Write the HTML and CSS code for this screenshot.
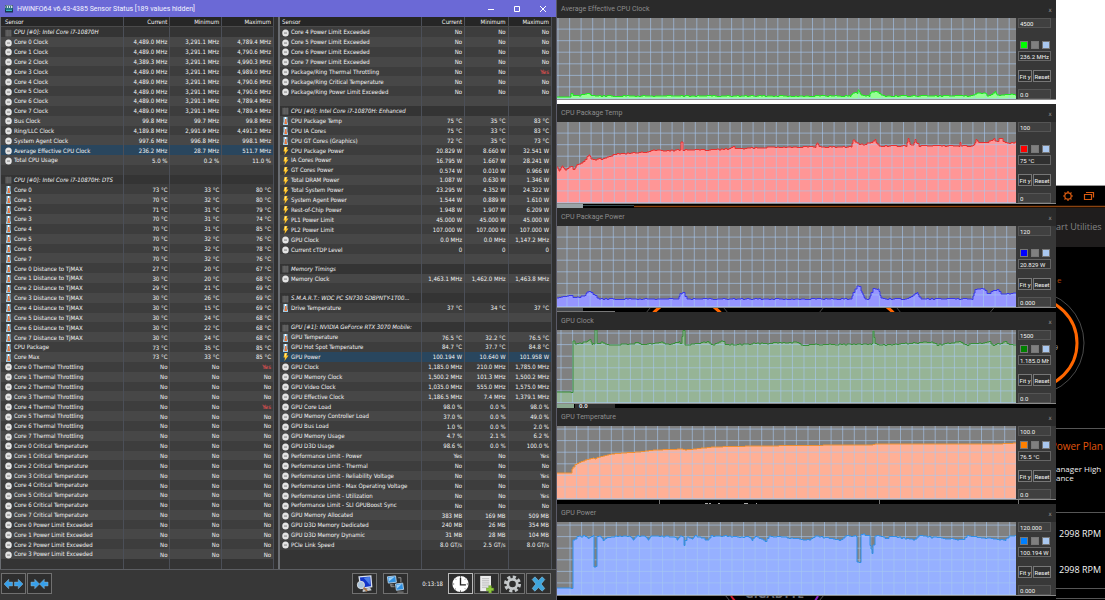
FILE: index.html
```
<!DOCTYPE html>
<html lang="en">
<head>
<meta charset="utf-8">
<title>HWiNFO64 Sensor Status</title>
<link rel="stylesheet" href="styles.css">
</head>
<body>
<svg width="0" height="0" class="defs" aria-hidden="true">
  <symbol id="clock" viewBox="0 0 14 16"><ellipse cx="7" cy="8" rx="6.5" ry="7.200" fill="#e4e4e4"/><path d="M4 7.2h6v1.8H4z" fill="#777"/></symbol>
  <symbol id="chip" viewBox="0 0 14 16"><path d="M1 2h12v13H1z" fill="#585858"/><path d="M2 1v14M5 1v14M8 1v14M11 1v14" stroke="#6b6b6b"/></symbol>
  <symbol id="temp" viewBox="0 0 14 16"><path d="M3 0h8v10l1 2v4H2v-4l1-2z" fill="#9fcbe4"/><path d="M6 4h3v5l1 3v2H5v-2l1-3z" fill="#e8743a"/><path d="M6 0h2v4H6z" fill="#fff"/></symbol>
  <symbol id="bolt" viewBox="0 0 14 16"><path d="M5 0h6L9 5h4L5 16l1-7H3z" fill="#ffc329"/><path d="M6 1h3L6 8z" fill="#fff09a"/></symbol>
</svg>
<div class="desktop">
  <svg class="backdrop" viewBox="0 0 1105 600" preserveAspectRatio="xMaxYMin slice" aria-hidden="true">
    <path d="M0 0h1105v600H0z" fill="#000"/>
    <path d="M0 0h1105v185H0z" fill="#fff"/>
    <path d="M1056 185h49v1h-49z" fill="#999"/>
    <path d="M557 204h26v4h-26z" fill="#9aa4a8"/>
    <path d="M583 205.500h51" stroke="#344a50"/>
    <path d="M634 206.500h471" stroke="#8a4310" stroke-width="1.500"/>
    <path d="M557 208h548v39H557z" fill="#1f1d1d"/>
    <g stroke="#d85a10" fill="none" stroke-width="1.200">
      <circle cx="1068" cy="196" r="3.200"/>
      <path d="M1068 191v2M1068 199v2M1063 196h2M1071 196h2M1064.500 192.500l1.400 1.400M1070.100 198.100l1.400 1.400M1071.500 192.500l-1.400 1.400M1065.900 198.100l-1.400 1.400"/>
      <path d="M1084.500 194.500h7v5h-7zM1086 192.500h7.500v5"/>
    </g>
    <g fill="none" stroke="#4a4a4a">
      <circle cx="687" cy="343" r="51"/><circle cx="860" cy="343" r="51"/><circle cx="1032" cy="343" r="52"/>
    </g>
    <g fill="none" stroke="#f60" stroke-width="3">
      <circle cx="687" cy="343" r="45"/><path d="M860 298a45 45 0 0 1 0 90M1032 298a45 45 0 0 1 0 90"/>
    </g>
    <path d="M557 308h26v4h-26z" fill="#44474c"/><path d="M557 311.500h58" stroke="#777"/>
    <path d="M557 404h17v5h-17z" fill="#8aa890"/><path d="M575 404h40v5h-40z" fill="#303030"/>
    <path d="M1056 428.500h49M1056 512.500h49M1056 588.500h49M1056 598.500h49" stroke="#555"/>
    <path d="M659.500 498v8M879.500 498v8M1018.500 498v8" stroke="#777"/>
    <path d="M705 503.500h3M709 503.500h2M718 503.500h2M744 503.500h4M756 503.500h1" stroke="#aaa"/>
    <path d="M731 596l4 5" stroke="#d01828" stroke-width="2"/><path d="M818 596l-3 5" stroke="#8a20c0" stroke-width="2"/>
    <path d="M725 595l5 6M824 595l-5 6" stroke="#555"/>
    <g class="app-text">
      <text x="1056" y="230" font-size="9" fill="#858585">art Utilities</text>
      <text x="1057" y="283" font-size="8" fill="#b34708">e</text>
      <text x="1054" y="350" font-size="7" fill="#aaa">9</text>
      <text x="1103" y="450" text-anchor="end" font-size="10" fill="#e2560d">Power Plan</text>
      <text x="1056" y="472" font-size="8" fill="#eee">anager High</text>
      <text x="1056" y="481" font-size="8" fill="#eee">ance</text>
      <text x="1101" y="537" text-anchor="end" font-size="9" fill="#f4f4f4">2998 RPM</text>
      <text x="1101" y="573" text-anchor="end" font-size="9" fill="#f4f4f4">2998 RPM</text>
      <text x="745" y="598" font-size="12" font-weight="bold" fill="#666">GIGABYTE</text>
      <text x="579" y="408" font-size="6" font-weight="bold" fill="#ddd">0.0</text>
    </g>
  </svg>

  <main class="sensors">
    <header class="titlebar">
      <svg class="logo" viewBox="0 0 16 16" aria-hidden="true"><path d="M0 0h16v15H0z" fill="#163850"/><path d="M1 1h14v5H1z" fill="#d6e7ea"/><path d="M3 2v4M7 2v4M11 2v4" stroke="#17506a" stroke-width="1.500"/><path d="M1 8h14M2 11h12" stroke="#37b3bd" stroke-width="2"/></svg>
      <h1>HWiNFO64 v6.43-4385 Sensor Status [189 values hidden]</h1>
      <div class="controls">
        <button aria-label="Minimize"><svg viewBox="0 0 8 8"><path d="M1 4.500h6"/></svg></button>
        <button aria-label="Maximize"><svg viewBox="0 0 8 8"><path d="M1.500 1.500h5v5h-5z"/></svg></button>
        <button aria-label="Close"><svg viewBox="0 0 8 8"><path d="M1 1l6 6M7 1L1 7"/></svg></button>
      </div>
    </header>
    <div class="panels">
      <div class="panel"><table id="left" class="left"></table></div>
      <div class="panel"><table id="right" class="right"></table></div>
    </div>
    <footer class="toolbar">
      <button aria-label="Expand"><svg viewBox="0 0 20 12"><path d="M0 6l5-5v3h4v4H5v3zM20 6l-5-5v3h-4v4h4v3z" fill="#35a0ec" stroke="#9ab4c4" stroke-width=".5"/></svg></button>
      <button aria-label="Collapse"><svg viewBox="0 0 20 12"><path d="M10 6L5 1v3H1v4h4v3zM10 6l5-5v3h4v4h-4v3z" fill="#35a0ec" stroke="#9ab4c4" stroke-width=".5"/></svg></button>
      <span class="spacer"></span>
      <button class="gap" aria-label="Sensor settings"><svg viewBox="0 0 20 20"><path d="M4 2l13-1 1 12-12 2z" fill="#1234c8" stroke="#d8e0ee" stroke-width="1.500"/><path d="M9 3l7-1v9z" fill="#4b7ee8"/><path d="M8 16l8-2 2 3-10 2z" fill="#c4c8cc"/><circle cx="6" cy="11" r="4" fill="#a9c4dc" stroke="#ddd"/><path d="M9 14l4 4" stroke="#a97342" stroke-width="2"/></svg></button>
      <button class="gap" aria-label="Remote"><svg viewBox="0 0 20 20"><path d="M1 2l9-1 1 7-9 1z" fill="#2f8fe0" stroke="#b5d0e6"/><path d="M10 10l8-1 1 7-8 1z" fill="#2f8fe0" stroke="#b5d0e6"/><path d="M2 3l7-1-6 5zM11 11l6-1-5 5z" fill="#9cd0f8"/><path d="M13 3h3v5M5 10v3h4M4 11h4M12 19h7" stroke="#999" fill="none"/></svg></button>
      <time>0:13:18</time>
      <button class="active" aria-label="Reset clock"><svg viewBox="0 0 20 20"><circle cx="10" cy="10" r="9" fill="#fff"/><path d="M10 3v8h6" fill="none" stroke="#222" stroke-width="1.500"/><path d="M10 1v2M10 17v2M1 10h2M17 10h2M4 4l1 1M16 4l-1 1M4 16l1-1M16 16l-1-1" stroke="#555"/></svg></button>
      <button aria-label="Start logging"><svg viewBox="0 0 20 20"><path d="M3 1h12v17H3z" fill="#ececec"/><path d="M5 4h8M5 6h8M5 8h8M5 10h8M5 12h8M5 14h6" stroke="#aaa" stroke-width=".7"/><path d="M12.500 12h3v2.500H18v3h-2.500V20h-3v-2.500H10v-3h2.500z" fill="#8fc93c" stroke="#5e8f20" stroke-width=".5"/></svg></button>
      <button aria-label="Settings"><svg viewBox="0 0 20 20"><circle cx="10" cy="10" r="7.700" fill="none" stroke="#c4c8ca" stroke-width="3.500" stroke-dasharray="3.500 2.550"/><circle cx="10" cy="10" r="5.200" fill="none" stroke="#c4c8ca" stroke-width="3"/></svg></button>
      <button aria-label="Close sensors"><svg viewBox="0 0 20 20"><path d="M3 5l3-3 4 4 4-4 3 3-4 5 4 5-3 3-4-4-4 4-3-3 4-5z" fill="#3fa5dc" stroke="#96cbe8" stroke-width=".6"/></svg></button>
    </footer>
  </main>

  <section class="graphs" id="graphs" aria-label="Sensor graphs"></section>
</div>
<script src="script.js"></script>
</body>
</html>
```
FILE: styles.css
```
* { box-sizing: border-box; }
body { margin: 0; background: #000; font-family: "DejaVu Sans Condensed", "DejaVu Sans", sans-serif; font-size: 6px; color: #f4f4f4; }
button, input { font: inherit; color: inherit; margin: 0; padding: 0; border-radius: 0; }
h1, h2 { margin: 0; font-weight: normal; }
.defs, .backdrop { position: absolute; }
.desktop { position: relative; display: grid; grid-template-columns: 557fr 499fr 49fr; height: 100vh; min-height: 600px; overflow: hidden; }
.backdrop { inset: 0; width: 100%; height: 100%; }
.app-text { font-family: "Open Sans", sans-serif; }

.sensors { position: relative; display: flex; flex-direction: column; background: #373737; border-right: 1px solid #5a5a68; min-height: 0; }
.titlebar { display: flex; align-items: center; height: 17px; padding: 0 5px 0 5px; background: #6b69d6; color: #f4f4ff; gap: 4px; }
.titlebar h1 { flex: 1; font-family: Roboto, sans-serif; font-size: 7px; }
.logo { width: 8px; height: 8px; }
.controls { display: flex; gap: 10px; }
.controls button { display: flex; width: 16px; height: 16px; padding: 4px; border: 0; background: none; }
.controls svg { width: 8px; height: 8px; fill: none; stroke: #fff; stroke-width: 1; }

.panels { flex: 1; display: grid; grid-template-columns: 278fr 278fr; min-height: 0; border-bottom: 1px solid #5c5e62; }
.panel { border-left: 1px solid #6a6d72; padding-right: 4px; background: #303030; min-height: 0; }
.panel + .panel { border-left-width: 2px; }
table { width: 100%; height: 100%; table-layout: fixed; border-collapse: collapse; }
th, td { height: 9px; padding: 0 2px 0 0; line-height: 9px; text-align: right; white-space: nowrap; font-weight: normal; border-right: 1px solid #4b4f58; overflow: hidden; }
th:first-child { text-align: left; padding: 0 0 0 4px; text-overflow: ellipsis; }
thead th { background: #262626; border-bottom: 1px solid #4a4a4a; }
.left th:first-child { width: 45%; }
.left th:nth-child(2) { width: 17%; }
.left th:nth-child(3) { width: 19%; }
.right th:first-child { width: 52%; padding-left: 2px; }
.right th:nth-child(2), .right th:nth-child(3) { width: 16%; }
tbody tr { background: #3d3d3d; }
tbody tr:nth-child(even) { background: #474747; }
tbody tr.group { background: #343434; font-style: italic; }
tbody tr.selected { background: #29465e; }
tbody tr.filler { background: #343434; }
.alert { color: #ff5555; }
tbody th svg { width: 7px; height: 8px; vertical-align: middle; margin-right: 2px; }

.toolbar { display: flex; align-items: center; gap: 1px; height: 30px; padding: 0 5px 3px 1px; }
.toolbar button { display: flex; align-items: center; justify-content: center; width: 25px; height: 21px; border: 1px solid #707070; background: #2e2e2e; }
.toolbar button.active { border-color: #bbb; }
.toolbar button.gap { margin-right: 5px; }
.toolbar svg { width: 19px; height: 18px; }
.toolbar time { margin: 0 4px 0 8px; }
.spacer { flex: 1; }

.graphs { position: relative; display: flex; flex-direction: column; gap: 4px; }
.graph { display: grid; grid-template-rows: 18px 1fr; grid-template-columns: 1fr 40px; height: 100px; background: #383838; border-bottom: 1px solid #8a8a8a; }
.graph.short { height: 92px; }
.graph header { grid-column: 1 / -1; display: flex; align-items: center; justify-content: space-between; padding: 0 3px 0 4px; background: #2a2a2a; }
.graph h2 { font-family: Roboto, sans-serif; font-size: 7px; color: #8d8d8d; }
.graph header button { border: 0; width: 6px; height: 10px; background: none; color: #999; }
.plot { width: 100%; height: 100%; background: #808080; display: block; min-height: 0; }
.side { display: flex; flex-direction: column; padding: 0 5px 0 2px; min-height: 0; font-family: Roboto, sans-serif; }
.side input { width: 100%; height: 10px; padding: 0 1px; border: 1px solid #555; background: #404040; }
.side input.value { background: #303030; border-color: #666; }
.swatches { display: flex; gap: 3px; margin: auto 0 2px 2px; }
.swatches button { flex: none; width: 8px; height: 8px; border: 1px solid #777; }
.fit { display: flex; gap: 1px; margin: 9px 0 7px; }
.fit button { flex: 1 0 auto; height: 12px; border: 1px solid #777; background: #303030; }
.green { background: #00ff00; } .red { background: #ff0000; } .blue { background: #0000ff; }
.dark { background: #008000; } .orange { background: #ff8000; } .azure { background: #0080ff; }
.grey { background: #808080; } .pale { background: #aac8f0; }
```
FILE: script.js
```
const many = (count, make) => Array.from({ length: count }, (_, i) => make(i)).join("\n");
const no = (name) => `c|${name}|No|No|No`;
const yes = (name) => `c|${name}|No|No|!Yes`;

const left = `g|CPU [#0]: Intel Core i7-10870H
c|Core 0 Clock|4,489.0 MHz|3,291.1 MHz|4,789.4 MHz
c|Core 1 Clock|4,489.0 MHz|3,291.1 MHz|4,790.6 MHz
c|Core 2 Clock|4,389.3 MHz|3,291.1 MHz|4,990.3 MHz
c|Core 3 Clock|4,489.0 MHz|3,291.1 MHz|4,989.0 MHz
c|Core 4 Clock|4,489.0 MHz|3,291.1 MHz|4,790.6 MHz
c|Core 5 Clock|4,489.0 MHz|3,291.1 MHz|4,790.6 MHz
c|Core 6 Clock|4,489.0 MHz|3,291.1 MHz|4,789.4 MHz
c|Core 7 Clock|4,489.0 MHz|3,291.1 MHz|4,789.4 MHz
c|Bus Clock|99.8 MHz|99.7 MHz|99.8 MHz
c|Ring/LLC Clock|4,189.8 MHz|2,991.9 MHz|4,491.2 MHz
c|System Agent Clock|997.6 MHz|996.8 MHz|998.1 MHz
c|Average Effective CPU Clock|236.2 MHz|28.7 MHz|511.7 MHz|selected
c|Total CPU Usage|5.0 %|0.2 %|11.0 %
e
g|CPU [#0]: Intel Core i7-10870H: DTS
t|Core 0|73 °C|33 °C|80 °C
t|Core 1|70 °C|32 °C|80 °C
t|Core 2|71 °C|31 °C|79 °C
t|Core 3|70 °C|31 °C|74 °C
t|Core 4|70 °C|31 °C|85 °C
t|Core 5|70 °C|32 °C|76 °C
t|Core 6|70 °C|32 °C|78 °C
t|Core 7|70 °C|32 °C|76 °C
t|Core 0 Distance to TjMAX|27 °C|20 °C|67 °C
t|Core 1 Distance to TjMAX|30 °C|20 °C|68 °C
t|Core 2 Distance to TjMAX|29 °C|21 °C|69 °C
t|Core 3 Distance to TjMAX|30 °C|26 °C|69 °C
t|Core 4 Distance to TjMAX|30 °C|15 °C|69 °C
t|Core 5 Distance to TjMAX|30 °C|24 °C|68 °C
t|Core 6 Distance to TjMAX|30 °C|22 °C|68 °C
t|Core 7 Distance to TjMAX|30 °C|24 °C|68 °C
t|CPU Package|73 °C|35 °C|85 °C
t|Core Max|73 °C|33 °C|85 °C
${many(8, (i) => (i === 0 || i === 4 ? yes : no)(`Core ${i} Thermal Throttling`))}
${many(8, (i) => no(`Core ${i} Critical Temperature`))}
${many(4, (i) => no(`Core ${i} Power Limit Exceeded`))}
f`;

const right = `${many(4, (i) => no(`Core ${i + 4} Power Limit Exceeded`))}
${yes("Package/Ring Thermal Throttling")}
${no("Package/Ring Critical Temperature")}
${no("Package/Ring Power Limit Exceeded")}
e
g|CPU [#0]: Intel Core i7-10870H: Enhanced
t|CPU Package Temp|75 °C|35 °C|83 °C
t|CPU IA Cores|75 °C|33 °C|83 °C
t|CPU GT Cores (Graphics)|72 °C|35 °C|73 °C
b|CPU Package Power|20.829 W|8.660 W|32.541 W
b|IA Cores Power|16.795 W|1.667 W|28.241 W
b|GT Cores Power|0.574 W|0.010 W|0.966 W
b|Total DRAM Power|1.087 W|0.630 W|1.346 W
b|Total System Power|23.295 W|4.352 W|24.322 W
b|System Agent Power|1.544 W|0.889 W|1.610 W
b|Rest-of-Chip Power|1.948 W|1.907 W|6.209 W
b|PL1 Power Limit|45.000 W|45.000 W|45.000 W
b|PL2 Power Limit|107.000 W|107.000 W|107.000 W
c|GPU Clock|0.0 MHz|0.0 MHz|1,147.2 MHz
c|Current cTDP Level|0|0|0
e
g|Memory Timings
c|Memory Clock|1,463.1 MHz|1,462.0 MHz|1,463.8 MHz
e
g|S.M.A.R.T.: WDC PC SN730 SDBPNTY-1T00...
t|Drive Temperature|37 °C|34 °C|37 °C
e
g|GPU [#1]: NVIDIA GeForce RTX 3070 Mobile:
t|GPU Temperature|76.5 °C|32.2 °C|76.5 °C
t|GPU Hot Spot Temperature|84.7 °C|37.7 °C|84.8 °C
b|GPU Power|100.194 W|10.640 W|101.958 W|selected
c|GPU Clock|1,185.0 MHz|210.0 MHz|1,785.0 MHz
c|GPU Memory Clock|1,500.2 MHz|101.3 MHz|1,500.2 MHz
c|GPU Video Clock|1,035.0 MHz|555.0 MHz|1,575.0 MHz
c|GPU Effective Clock|1,186.5 MHz|7.4 MHz|1,379.1 MHz
c|GPU Core Load|98.0 %|0.0 %|98.0 %
c|GPU Memory Controller Load|37.0 %|0.0 %|49.0 %
c|GPU Bus Load|1.0 %|0.0 %|2.0 %
c|GPU Memory Usage|4.7 %|2.1 %|6.2 %
c|GPU D3D Usage|98.6 %|0.0 %|100.0 %
c|Performance Limit - Power|Yes|No|Yes
c|Performance Limit - Thermal|No|No|No
c|Performance Limit - Reliability Voltage|No|No|Yes
c|Performance Limit - Max Operating Voltage|No|No|No
c|Performance Limit - Utilization|No|No|Yes
c|Performance Limit - SLI GPUBoost Sync|No|No|No
c|GPU Memory Allocated|383 MB|169 MB|509 MB
c|GPU D3D Memory Dedicated|240 MB|26 MB|354 MB
c|GPU D3D Memory Dynamic|31 MB|28 MB|104 MB
c|PCIe Link Speed|8.0 GT/s|2.5 GT/s|8.0 GT/s
f
f`;

const icons = { c: "clock", g: "chip", t: "temp", b: "bolt" };
const classes = { g: "group", f: "filler" };

function fillTable(id, source) {
  const rows = source.split("\n").map((line) => {
    const [kind, name = "", current = "", low = "", high = "", mark = ""] = line.split("|");
    const icon = icons[kind] ? `<svg aria-hidden="true"><use href="#${icons[kind]}"/></svg>` : "";
    const cells = [current, low, high]
      .map((v) => (v[0] === "!" ? `<td class="alert">${v.slice(1)}</td>` : `<td>${v || "&nbsp;"}</td>`)).join("");
    return `<tr class="${mark || classes[kind] || ""}"><th scope="row">${icon}${name}</th>${cells}</tr>`;
  }).join("");
  document.getElementById(id).innerHTML =
    `<thead><tr><th>Sensor</th><th>Current</th><th>Minimum</th><th>Maximum</th></tr></thead><tbody>${rows}</tbody>`;
}

fillTable("left", left);
fillTable("right", right);

const graphs = [
  { name: "Average Effective CPU Clock", max: "4500", value: "236.2 MHz", min: "0.0", color: "green", line: "#20e820", fill: "#96ff96", phase: 1, noise: 0.8,
    points: [[0,79],[13,79],[14,76],[18,78],[30,76],[32,75],[35,78],[293,78],[296,75],[300,75],[301,72],[304,77],[312,78],[314,74],[321,74],[325,78],[415,78],[420,75],[428,75],[430,78],[438,74],[441,78],[455,76],[459,77]] },
  { name: "CPU Package Temp", max: "100", value: "75 °C", min: "0", color: "red", line: "#e83030", fill: "#ff9696", phase: 11, noise: 0.9,
    points: [[0,45],[2,49],[5,44],[8,48],[13,44],[17,48],[20,43],[25,40],[30,35],[32,33],[35,38],[44,37],[52,34],[60,32],[75,31],[90,30],[95,28],[110,29],[122,28],[123,28],[124,20],[125,28],[150,28],[170,27],[176,25],[180,27],[215,25],[258,25],[260,21],[262,25],[294,25],[296,18],[300,21],[306,23],[314,20],[318,18],[321,24],[349,24],[351,17],[353,23],[356,23],[358,18],[361,24],[402,24],[403,20],[404,24],[416,24],[419,18],[422,21],[430,20],[437,17],[439,21],[443,15],[447,20],[452,21],[459,20]] },
  { name: "CPU Package Power", max: "120", value: "20.829 W", min: "0.000", color: "blue", line: "#3838e8", fill: "#9696ff", phase: 10, noise: 0.8,
    points: [[0,72],[14,69],[17,72],[28,70],[31,64],[36,68],[41,73],[121,73],[123,68],[126,67],[130,73],[294,73],[297,64],[301,59],[305,67],[308,73],[312,73],[315,63],[321,63],[324,72],[330,73],[350,73],[354,70],[360,67],[363,73],[415,73],[418,64],[425,62],[431,68],[436,65],[440,64],[444,68],[459,67]] },
  { name: "GPU Clock", max: "1500", value: "1.185.0 MH", min: "0.0", color: "dark", line: "#389038", fill: "#96b496", phase: 4, noise: 0.9, short: true,
    points: [[0,62],[14,62],[15,11],[19,14],[30,12],[33,9],[35,14],[37,14],[38,0],[39,14],[45,12],[49,15],[75,14],[80,12],[84,15],[105,12],[109,15],[122,12],[124,14],[126,0],[127,15],[150,12],[155,15],[165,11],[169,15],[240,12],[244,15],[315,14],[316,1],[318,14],[325,15],[375,12],[380,15],[403,12],[407,15],[432,12],[436,15],[448,12],[452,15],[459,15]] },
  { name: "GPU Temperature", max: "100.0", value: "76.5 °C", min: "0.0", color: "orange", line: "#f09030", fill: "#ffb096", phase: 8, noise: 0, short: true,
    points: [[0,47],[14,47],[15,43],[17,39],[23,36],[31,33],[36,32],[38,33],[41,31],[55,28],[65,27],[80,26],[98,24],[125,23],[127,24],[155,21],[198,20],[288,19],[313,19],[318,18],[440,18],[459,17]] },
  { name: "GPU Power", max: "120.000", value: "100.194 W", min: "0.000", color: "azure", line: "#3090e8", fill: "#96b0ff", phase: 13, noise: 0.9, short: true,
    points: [[0,66],[14,66],[15,20],[19,15],[27,14],[31,17],[34,14],[36,14],[37,45],[39,45],[40,14],[44,15],[46,19],[49,15],[73,14],[76,18],[79,14],[88,14],[91,18],[94,14],[118,15],[120,18],[123,14],[126,15],[127,24],[129,14],[135,17],[138,14],[150,18],[154,14],[191,15],[195,18],[198,14],[208,19],[212,14],[253,18],[257,14],[284,18],[288,14],[299,14],[300,40],[302,40],[303,12],[312,14],[313,24],[315,31],[317,14],[325,14],[329,18],[333,14],[357,18],[361,14],[405,18],[409,14],[448,18],[451,14],[459,13]] }
];

function trace(points, noise) {
  let path = "", k = 0, seed = 7;
  for (let x = 0; x <= 459; x += 1) {
    while (k < points.length - 2 && points[k + 1][0] <= x) k += 1;
    const [[x0, y0], [x1, y1]] = [points[k], points[k + 1]];
    if (x % 2 === 0 || x1 - x0 < 4) {
      seed = (seed * 1103515245 + 12345) % 2147483648;
      const jitter = x < 14 && noise ? 0 : (seed / 2147483648 - 0.5) * noise * 1.4;
      const y = Math.round((y0 + (y1 - y0) * Math.min(1, (x - x0) / (x1 - x0)) + jitter) * 2) / 2;
      path += path ? `H${x}V${y}` : `M0 ${y}`;
    }
  }
  return path + "H459";
}

document.getElementById("graphs").innerHTML = graphs.map((g) => {
  const h = g.short ? 73 : 81;
  const path = trace(g.points, g.noise);
  let grid = "";
  for (let i = 0; i < 40; i += 1) grid += `M${(g.phase + i * 11.57).toFixed(1)} 0V${h}`;
  for (let y = h - 0.5; y > 0; y -= 11.57) grid += `M0 ${y.toFixed(1)}H459`;
  const label = (what) => `aria-label="${g.name} ${what}"`;
  return `<article class="graph${g.short ? " short" : ""}">
    <header><h2>${g.name}</h2><button ${label("close")}>x</button></header>
    <svg class="plot" viewBox="0 0 459 ${h}" preserveAspectRatio="none" role="img" ${label("graph")}>
      <path d="${path}V${h}H0Z" fill="${g.fill}"/>
      <path d="${grid}" stroke="#a6c8f0" stroke-opacity=".6" fill="none"/>
      <path d="${path}" stroke="${g.line}" fill="none"/>
    </svg>
    <div class="side">
      <input ${label("upper limit")} value="${g.max}">
      <div class="swatches"><button class="${g.color}" ${label("line colour")}></button><button class="grey" ${label("background colour")}></button><button class="pale" ${label("grid colour")}></button></div>
      <input class="value" ${label("value")} value="${g.value}" readonly>
      <div class="fit"><button>Fit y</button><button>Reset</button></div>
      <input ${label("lower limit")} value="${g.min}">
    </div>
  </article>`;
}).join("");
```
